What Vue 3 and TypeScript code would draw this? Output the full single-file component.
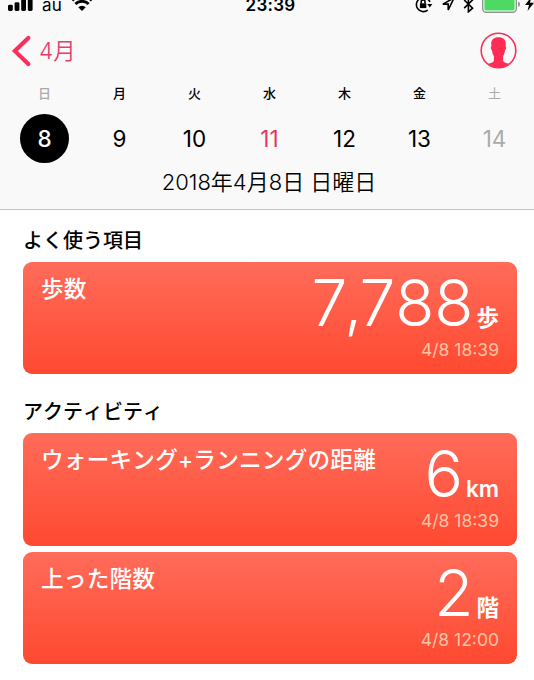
<script setup lang="ts">
interface Day {
  name: string
  date: number
  state?: 'selected' | 'today' | 'muted'
}
interface Metric {
  title: string
  value: string
  unit: string
  time: string
}
interface Section {
  heading: string
  items: Metric[]
}

const days: Day[] = [
  { name: '日', date: 8, state: 'selected' },
  { name: '月', date: 9 },
  { name: '火', date: 10 },
  { name: '水', date: 11, state: 'today' },
  { name: '木', date: 12 },
  { name: '金', date: 13 },
  { name: '土', date: 14, state: 'muted' },
]

const sections: Section[] = [
  {
    heading: 'よく使う項目',
    items: [{ title: '歩数', value: '7,788', unit: '歩', time: '4/8 18:39' }],
  },
  {
    heading: 'アクティビティ',
    items: [
      { title: 'ウォーキング+ランニングの距離', value: '6', unit: 'km', time: '4/8 18:39' },
      { title: '上った階数', value: '2', unit: '階', time: '4/8 12:00' },
    ],
  },
]

/* Splits a number around its thousands separators, keeping them as parts. */
const parts = (value: string): string[] => value.split(/(,)/)
</script>

<template>
  <main class="screen">
    <header class="top">
      <div class="status">
        <div class="status-left">
          <svg class="signal" width="25" height="16" viewBox="0 0 25 16">
            <rect x="0" y="9.8" width="4.8" height="6.2" rx="1.4" />
            <rect x="6.6" y="7.2" width="4.8" height="8.8" rx="1.4" />
            <rect x="13.2" y="4" width="4.8" height="12" rx="1.4" />
            <rect x="19.8" y="0" width="4.8" height="16" rx="1.4" />
          </svg>
          <span class="carrier">au</span>
          <svg class="wifi" width="22" height="16" viewBox="0 0 22 16">
            <path d="M1.2 5.4a14 14 0 0 1 19.6 0" />
            <path d="M4.4 9a9.3 9.3 0 0 1 13.2 0" />
            <path class="dot" d="M11 16 7.3 12.2a5.3 5.3 0 0 1 7.4 0z" />
          </svg>
        </div>
        <span class="clock">23:39</span>
        <div class="status-right">
          <svg class="lock" width="18" height="18" viewBox="0 0 18 18">
            <path d="M12.7 15.2A7 7 0 1 1 14.9 7" />
            <path class="solid" d="M12.2 9h5.2l-2.6 3.6z" />
            <path class="solid" d="M4.9 8.3h6.4v4.8H4.9z" />
            <path d="M6.2 8.4V6.8a1.9 1.9 0 0 1 3.8 0v1.6" />
          </svg>
          <svg class="locate" width="13" height="14" viewBox="0 0 13 14">
            <path d="M12.1.9.8 7.1h5.4v5.8z" />
          </svg>
          <svg class="bluetooth" width="11" height="18" viewBox="0 0 11 18">
            <path d="m1.2 5 8.4 8.1-4.2 3.7V1.2l4.2 3.7-8.4 8.2" />
          </svg>
          <svg class="battery" width="39" height="18" viewBox="0 0 39 18">
            <rect class="shell" x=".7" y=".7" width="33.6" height="16.6" rx="3.5" />
            <rect class="charge" x="2.4" y="2.2" width="30.2" height="13.4" rx="1.6" />
            <path class="cap" d="M36.1 6.5c2.6.8 2.6 4.7 0 5.5z" />
          </svg>
          <svg class="bolt" width="9" height="14" viewBox="0 0 9 14">
            <path d="M6.3 0 0 8h4L2.5 14 9 5.8H5z" />
          </svg>
        </div>
      </div>

      <nav class="nav">
        <a class="back">
          <svg width="19" height="32" viewBox="0 0 19 32">
            <path d="M16.3 2.9 2.8 15.9l13.5 13.2" />
          </svg>
          <span>4月</span>
        </a>
        <svg class="profile" width="37" height="37" viewBox="0 0 37 37">
          <circle cx="18.5" cy="18.5" r="17.3" />
          <path
            d="M18.5 5.2c-4.800 0-7.400 2.500-7.300 6.600l.2 2.500c-1 .3-.5 3.400.6 4.200.4 2.800.9 4.300 1.900 5.600v4.500c-.1 1.200-.8 1.600-2.300 2.100l-4 1.400C10.600 34.700 14 35.800 18.500 35.800s8-1.100 10.900-3.700l-4-1.400c-1.500-.5-2.200-.9-2.300-2.100v-4.500c1-1.300 1.500-2.800 1.900-5.600 1.100-.8 1.600-3.900.6-4.200l.2-2.500c.1-4.100-2.500-6.600-7.300-6.600z"
          />
        </svg>
      </nav>

      <div class="week">
        <div v-for="day in days" :key="day.date" class="day" :class="day.state">
          <span class="name">{{ day.name }}</span>
          <span class="date">{{ day.date }}</span>
        </div>
      </div>
      <p class="full-date">2018年4月8日 日曜日</p>
    </header>

    <section v-for="section in sections" :key="section.heading" class="group">
      <h2>{{ section.heading }}</h2>
      <div class="cards">
        <article v-for="item in section.items" :key="item.title" class="card">
          <h3>{{ item.title }}</h3>
          <div class="reading">
            <div class="amount">
              <span class="value"><span
                v-for="(part, i) in parts(item.value)"
                :key="i"
                :class="{ separator: part === ',' }"
              >{{ part }}</span></span>
              <span class="unit">{{ item.unit }}</span>
            </div>
            <time>{{ item.time }}</time>
          </div>
        </article>
      </div>
    </section>
  </main>
</template>

<style>
body {
  margin: 0;
  background: #fff;
}
</style>

<style scoped>
.screen {
  width: 534px;
  height: 680px;
  overflow: hidden;
  background: #fff;
  color: #000;
  font-family: Inter, "Noto Sans CJK JP", sans-serif;
  font-kerning: none;
}
.top {
  display: flow-root;
  box-sizing: border-box;
  height: 210px;
  background: #f9f9f9;
  border-bottom: 1px solid #c4c4c4;
}
/* The status bar starts above the window edge. */
.status {
  display: grid;
  grid-template-columns: 1fr auto 1fr;
  height: 22px;
  margin-top: -9px;
  padding-left: 8px;
}
.status svg {
  flex: none;
}
.status-left,
.status-right {
  display: flex;
  align-items: flex-end;
  box-sizing: border-box;
  height: 22px;
}
.status-left {
  padding-bottom: 2px;
}
.status-right {
  justify-content: flex-end;
}
.carrier {
  margin: 0 9px 0 9px;
  font-size: 17px;
  line-height: 12px;
  letter-spacing: 0.2px;
}
.wifi path {
  fill: none;
  stroke: #000;
  stroke-width: 2.8;
}
.wifi .dot {
  fill: #000;
  stroke: none;
}
.clock {
  padding-right: 1px;
  font-size: 17px;
  font-weight: 600;
  line-height: 28px;
  letter-spacing: 0.3px;
}
.lock,
.locate,
.bluetooth {
  fill: none;
  stroke: #000;
  stroke-width: 1.6;
}
.lock {
  margin-right: 9px;
}
.locate {
  margin: 0 8px 2px 0;
}
.lock .solid {
  fill: #000;
  stroke: none;
}
.bluetooth {
  margin-right: 8px;
}
.shell {
  fill: #fff;
  stroke: #929292;
  stroke-width: 1.4;
}
.charge {
  fill: #4cd964;
}
.cap {
  fill: #929292;
}
.bolt {
  margin: 0 0 2px 4px;
}
.nav {
  display: flex;
  align-items: flex-start;
  justify-content: space-between;
  height: 51px;
  padding: 19px 17px 0 12px;
}
.back {
  display: flex;
  align-items: center;
  margin-top: 3px;
  gap: 8px;
  font-size: 22.500px;
  font-weight: 350;
  line-height: 32px;
}
.back span {
  color: #e83d6b;
}
.back path {
  fill: none;
  stroke: #fa2f5e;
  stroke-width: 4.2;
  stroke-linecap: round;
}
.profile circle {
  fill: none;
  stroke: #ff2d55;
  stroke-width: 1.6;
}
.profile path {
  fill: #ff2d55;
}
.week {
  display: grid;
  grid-template-columns: repeat(7, 75px);
  margin-left: 7px;
}
.day {
  display: flex;
  flex-direction: column;
  align-items: center;
}
.name {
  height: 31px;
  font-size: 13px;
  font-weight: 500;
  line-height: 20px;
}
.date {
  width: 49px;
  height: 49px;
  border-radius: 50%;
  font-size: 22.500px;
  line-height: 50px;
  text-align: center;
}
.selected .name,
.muted {
  color: #aaa;
}
.muted .name {
  font-weight: 400;
}
.selected .date {
  background: #000;
  color: #fff;
  font-weight: 500;
}
.today .date {
  color: #e33866;
}
.full-date {
  margin: 4px 0 0;
  padding-left: 4px;
  font-size: 22px;
  font-weight: 350;
  line-height: 31px;
  text-align: center;
}
.group h2 {
  box-sizing: border-box;
  height: 52px;
  margin: 0 0 0 23px;
  padding-top: 16px;
  font-size: 20px;
  font-weight: 500;
  line-height: 30px;
}
.group + .group h2 {
  height: 59px;
  padding-top: 23px;
}
.cards {
  display: grid;
  gap: 6px;
  padding: 0 17px 0 23px;
}
.card {
  display: flex;
  justify-content: space-between;
  box-sizing: border-box;
  height: 112.300px;
  padding: 8px 18px 0;
  border-radius: 9px;
  background: linear-gradient(#ff6c5a, #ff4930);
  color: #fff;
}
.card h3 {
  margin: 0;
  font-size: 22.600px;
  font-weight: 500;
  line-height: 37px;
  letter-spacing: 0.24px;
  white-space: nowrap;
}
.reading {
  display: flex;
  flex-direction: column;
  align-items: flex-end;
}
.amount {
  display: flex;
  align-items: baseline;
  gap: 3px;
  height: 68px;
  line-height: 66px;
  white-space: nowrap;
}
.value {
  font-size: 64px;
  font-weight: 275;
}
.separator {
  margin: 0 -3px 0 -3px;
}
.unit {
  font-size: 22.500px;
  font-weight: 600;
}
time {
  color: #ffc3a5;
  font-size: 17.500px;
  line-height: 24px;
}
</style>
